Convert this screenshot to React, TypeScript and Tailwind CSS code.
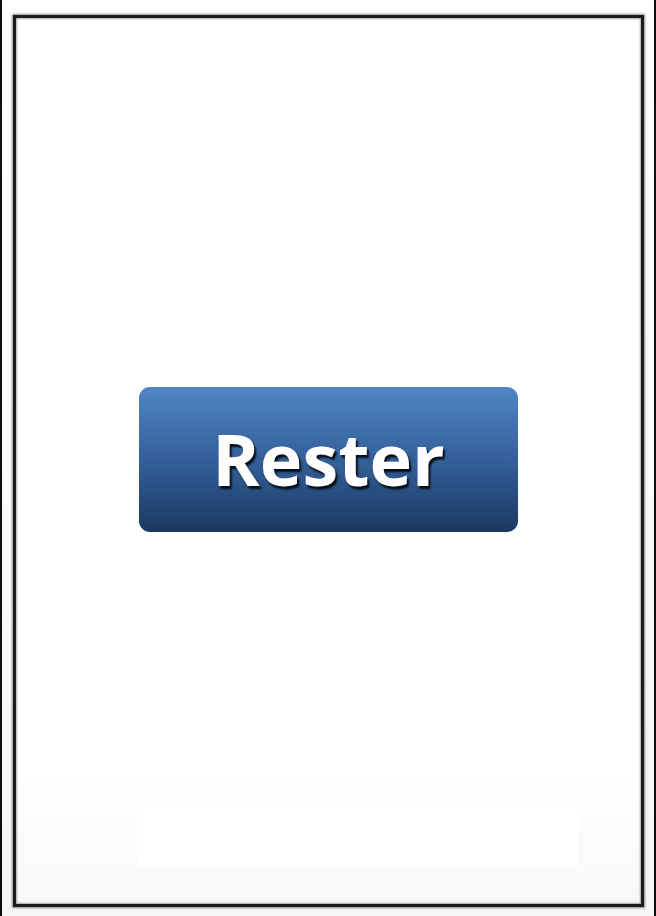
export default function App() {
  return (
    <div className="flex h-[916px] w-[656px] border-x-2 border-[#0d0d0d] bg-gradient-to-b from-white to-[#f6f6f6] pb-[9px] pl-[11px] pr-[10px] pt-[15px]">
      {/* Framed panel */}
      <div className="relative flex flex-1 items-center justify-center border-[3px] border-[#1c1c1c] bg-gradient-to-b from-white from-85% to-[#f8f8f8] shadow-[0_0_2px_1px_rgba(0,0,0,0.45),inset_0_0_2px_1px_rgba(0,0,0,0.35)]">
        <button
          className="mb-[3px] flex h-[145px] w-[379px] items-center justify-center rounded-[11px] bg-gradient-to-b from-[#5087c7] via-[#34609a] to-[#1b3963] pb-[4px] text-[72px] font-bold text-white [font-family:'Open_Sans',sans-serif] [text-shadow:2px_3px_2px_rgba(0,0,0,0.85)]"
        >
          Rester
        </button>
        {/* faint white patch near the bottom */}
        <div className="absolute bottom-[36px] left-[121px] h-[62px] w-[441px] bg-white" aria-hidden />
      </div>
    </div>
  );
}
